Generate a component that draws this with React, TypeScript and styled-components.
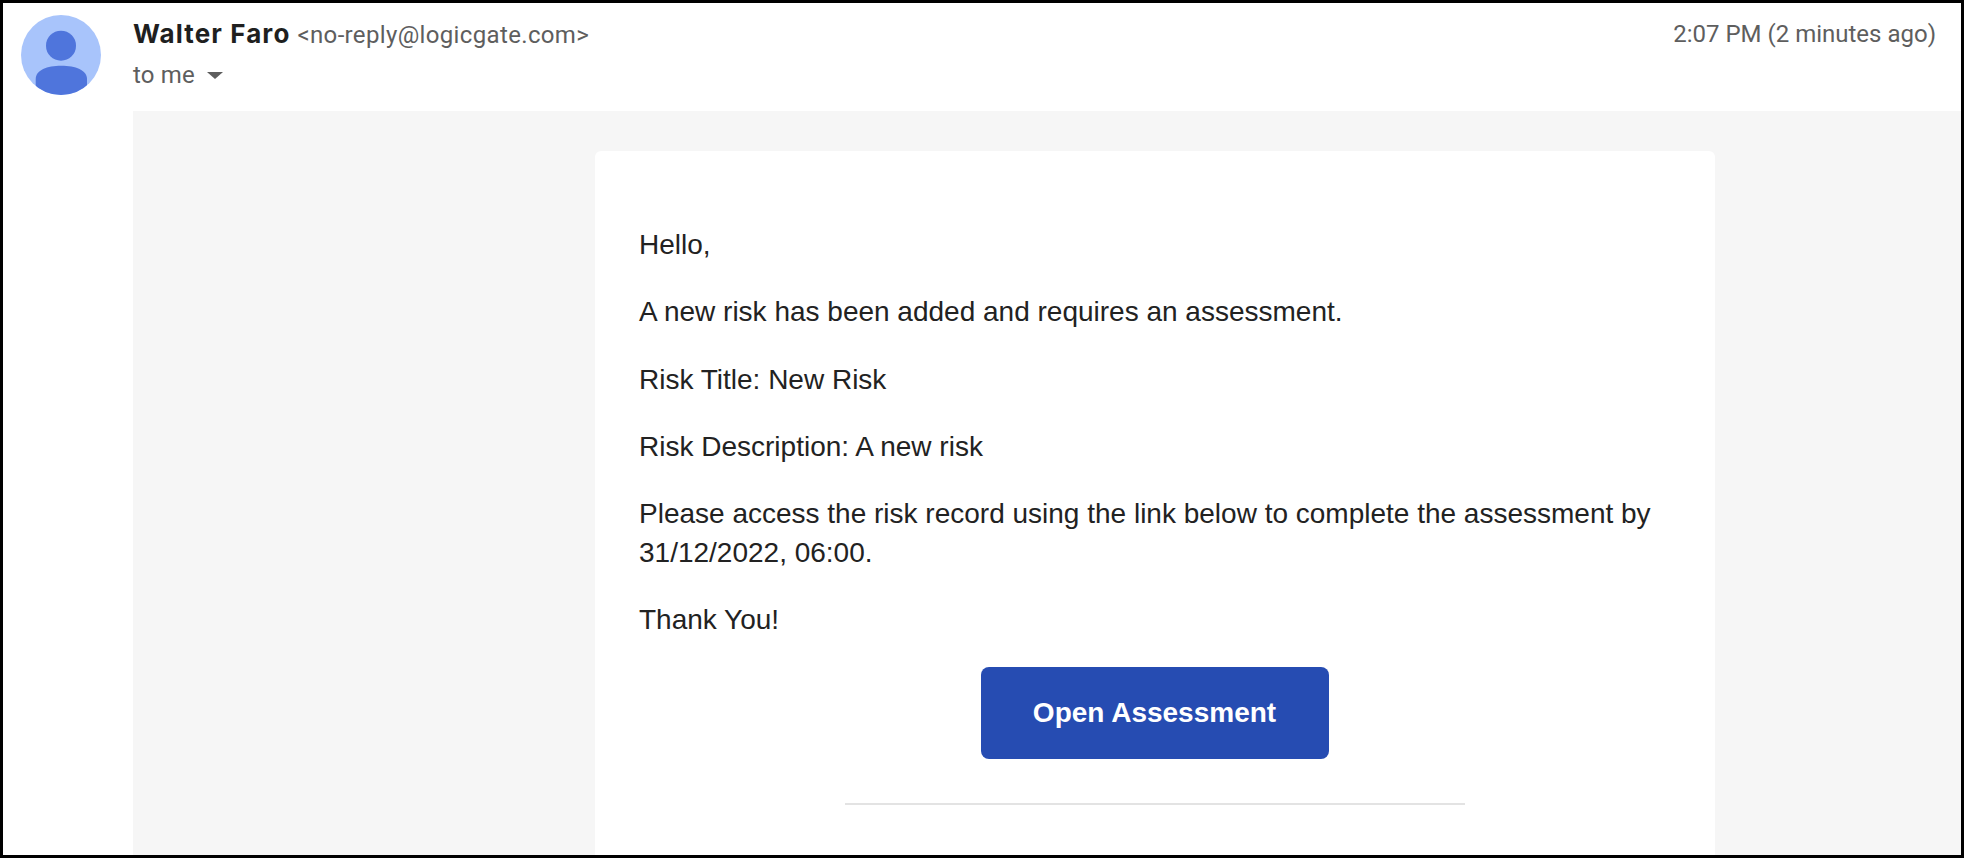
import React from "react";
import styled, { createGlobalStyle } from "styled-components";

const Global = createGlobalStyle`
  html, body { margin: 0; padding: 0; background: #fff; overflow: hidden; }
`;

const Frame = styled.div`
  box-sizing: border-box;
  width: 1964px;
  height: 858px;
  border: 3px solid #000;
  background: #fff;
  display: flex;
  overflow: hidden;
`;

const AvatarColumn = styled.div`
  width: 130px;
  flex: none;
  padding: 12px 0 0 18px;
  box-sizing: border-box;
`;

const Main = styled.div`
  flex: 1;
  min-width: 0;
  display: flex;
  flex-direction: column;
`;

const Header = styled.header`
  height: 108px;
  flex: none;
  display: flex;
  justify-content: space-between;
  align-items: flex-start;
  padding: 16px 25px 0 0;
  box-sizing: border-box;
  font-family: Roboto, "Liberation Sans", sans-serif;
`;

const SenderLine = styled.div`
  display: flex;
  align-items: baseline;
  gap: 7px;
  height: 30px;
  line-height: 30px;
`;

const SenderName = styled.span`
  font-family: Inter, Roboto, sans-serif;
  font-size: 26px;
  font-weight: 700;
  color: #1f1f1f;
  letter-spacing: 1.1px;
`;

const SenderEmail = styled.span`
  font-size: 24px;
  color: #5e5e5e;
  letter-spacing: 0.35px;
`;

const ToLine = styled.div`
  display: flex;
  align-items: center;
  gap: 12px;
  margin-top: 11px;
  font-size: 24px;
  letter-spacing: 0.2px;
  line-height: 30px;
  color: #5e5e5e;
`;

const Time = styled.div`
  font-size: 24px;
  line-height: 30px;
  color: #5e5e5e;
`;

const Caret = styled.svg`
  width: 16px;
  height: 7px;
  display: block;
`;

const Panel = styled.div`
  flex: 1;
  background: #f6f6f6;
  display: flex;
  justify-content: flex-start;
  align-items: flex-start;
  padding: 40px 0 0 462px;
`;

const Card = styled.div`
  width: 1120px;
  height: 720px;
  flex: none;
  box-sizing: border-box;
  background: #fff;
  border-radius: 6px;
  padding: 74px 45px 0 44px;
  font-family: "Liberation Sans", Arial, sans-serif;
  font-size: 28px;
  line-height: 39px;
  color: #222;
`;

const Para = styled.p`
  margin: 0 0 28.3px;
`;

const ButtonRow = styled.div`
  display: flex;
  justify-content: center;
  margin-top: -1px;
`;

const Button = styled.a`
  width: 348px;
  height: 92px;
  display: flex;
  align-items: center;
  justify-content: center;
  background: #264cb2;
  border-radius: 8px;
  color: #fff;
  font-weight: 700;
  font-size: 28px;
`;

const Divider = styled.hr`
  width: 620px;
  height: 2px;
  margin: 44px auto 0;
  border: 0;
  background: #e3e3e3;
`;

function Avatar() {
  return (
    <svg width="80" height="80" viewBox="0 0 80 80" style={{ display: "block" }}>
      <defs>
        <clipPath id="avatarClip">
          <circle cx="40" cy="40" r="40" />
        </clipPath>
      </defs>
      <circle cx="40" cy="40" r="40" fill="#a8c4fb" />
      <g clipPath="url(#avatarClip)" fill="#4f75dc">
        <circle cx="40" cy="30.7" r="15" />
        <path d="M14.7 85V64C14.7 55 26 50.7 40.3 50.7S66 55 66 64V85Z" />
      </g>
    </svg>
  );
}

export default function App() {
  return (
    <>
      <Global />
      <Frame>
        <AvatarColumn>
          <Avatar />
        </AvatarColumn>
        <Main>
          <Header>
            <div>
              <SenderLine>
                <SenderName>Walter Faro</SenderName>
                <SenderEmail>&lt;no-reply@logicgate.com&gt;</SenderEmail>
              </SenderLine>
              <ToLine>
                to me
                <Caret viewBox="0 0 16 7">
                  <path d="M0 0h16L8 7z" fill="#5e5e5e" />
                </Caret>
              </ToLine>
            </div>
            <Time>2:07 PM (2 minutes ago)</Time>
          </Header>
          <Panel>
            <Card>
              <Para>Hello,</Para>
              <Para>A new risk has been added and requires an assessment.</Para>
              <Para>Risk Title: New Risk</Para>
              <Para>Risk Description: A new risk</Para>
              <Para>
                Please access the risk record using the link below to complete the assessment by 31/12/2022, 06:00.
              </Para>
              <Para>Thank You!</Para>
              <ButtonRow>
                <Button>Open Assessment</Button>
              </ButtonRow>
              <Divider />
            </Card>
          </Panel>
        </Main>
      </Frame>
    </>
  );
}
